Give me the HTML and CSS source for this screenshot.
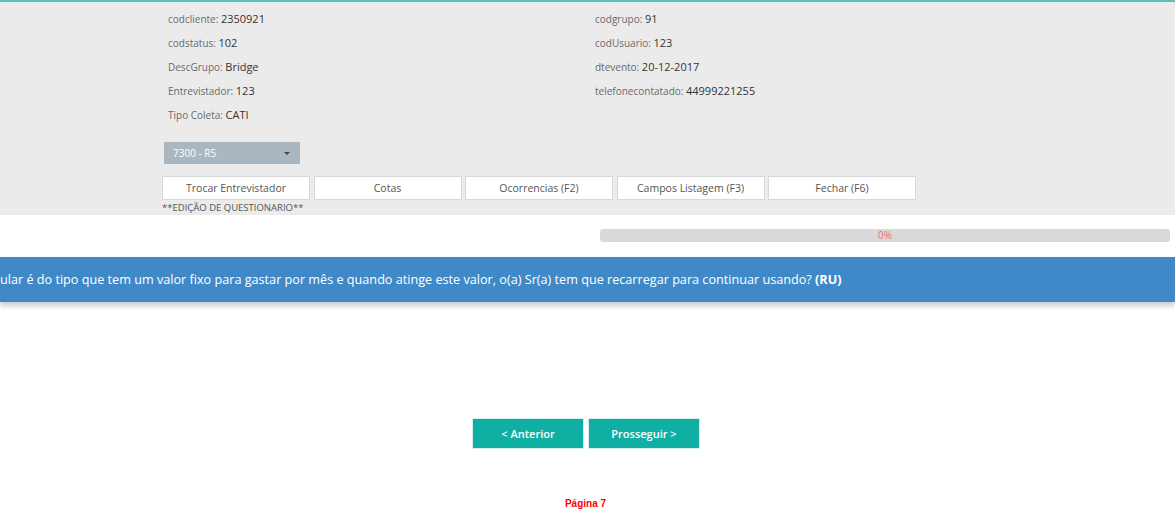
FILE: index.html
```html
<!DOCTYPE html>
<html lang="pt">
<head>
<meta charset="utf-8">
<title>Questionário</title>
<link rel="stylesheet" href="styles.css">
</head>
<body>
<div class="panel">
  <div class="panel-inner">
    <div class="info">
      <div class="col col-left">
        <div class="row"><span class="lbl">codcliente: </span><span class="val">2350921</span></div>
        <div class="row"><span class="lbl">codstatus: </span><span class="val">102</span></div>
        <div class="row"><span class="lbl">DescGrupo: </span><span class="val">Bridge</span></div>
        <div class="row"><span class="lbl">Entrevistador: </span><span class="val">123</span></div>
        <div class="row"><span class="lbl">Tipo Coleta: </span><span class="val">CATI</span></div>
      </div>
      <div class="col">
        <div class="row"><span class="lbl">codgrupo: </span><span class="val">91</span></div>
        <div class="row"><span class="lbl">codUsuario: </span><span class="val">123</span></div>
        <div class="row"><span class="lbl">dtevento: </span><span class="val">20-12-2017</span></div>
        <div class="row"><span class="lbl">telefonecontatado: </span><span class="val">44999221255</span></div>
      </div>
    </div>
    <div class="select"><span>7300 - R5</span><span class="caret"></span></div>
    <div class="actions">
      <button class="btn">Trocar Entrevistador</button>
      <button class="btn">Cotas</button>
      <button class="btn">Ocorrencias (F2)</button>
      <button class="btn">Campos Listagem (F3)</button>
      <button class="btn">Fechar (F6)</button>
    </div>
    <div class="mode">**EDIÇÃO DE QUESTIONARIO**</div>
  </div>
</div>
<div class="progress-wrap">
  <div class="progress"><span>0%</span></div>
</div>
<div class="question">ular é do tipo que tem um valor fixo para gastar por mês e quando atinge este valor, o(a) Sr(a) tem que recarregar para continuar usando? <b>(RU)</b></div>
<div class="nav">
  <button class="nav-btn">&lt; Anterior</button>
  <button class="nav-btn">Prosseguir &gt;</button>
</div>
<div class="page">Página 7</div>
</body>
</html>
```
FILE: styles.css
```css
html, body {
  margin: 0;
  padding: 0;
  background: #fff;
  font-family: "Open Sans", "Noto Sans", sans-serif;
}
.panel {
  background: #ebebeb;
  border-top: 2px solid #5cbfb9;
  height: 215px;
  box-sizing: border-box;
}
.panel-inner {
  padding: 3px 0 0 162px;
}
.info {
  display: flex;
  padding-left: 6px;
}
.col {
  display: flex;
  flex-direction: column;
}
.col-left {
  width: 427px;
}
.row {
  height: 24px;
  line-height: 24px;
  white-space: nowrap;
}
.lbl {
  font-size: 10px;
  color: #6a6a6a;
}
.val {
  font-size: 11px;
  color: #333;
}
.select {
  margin: 17px 0 0 2px;
  width: 136px;
  height: 22px;
  background: #aab7c0;
  color: #fff;
  font-size: 10px;
  display: flex;
  align-items: center;
  justify-content: space-between;
  padding: 0 10px 0 9px;
  box-sizing: border-box;
}
.caret {
  width: 0;
  height: 0;
  border-left: 3px solid transparent;
  border-right: 3px solid transparent;
  border-top: 3px solid #444;
}
.actions {
  display: flex;
  gap: 3.5px;
  margin-top: 12px;
}
.btn {
  width: 148px;
  height: 24px;
  background: #fff;
  border: 1px solid #d8d8d8;
  font-family: "Open Sans", sans-serif;
  font-size: 10.5px;
  color: #555;
  padding: 0;
}
.mode {
  font-size: 9.5px;
  color: #555;
  line-height: 13px;
  margin-top: 1px;
}
.progress-wrap {
  display: flex;
  justify-content: flex-end;
  padding: 14px 5px 0 0;
}
.progress {
  width: 570px;
  height: 13px;
  background: #d9d9d9;
  border-radius: 3px;
  font-size: 10px;
  line-height: 13px;
  color: #f46b6b;
  text-align: center;
}
.question {
  margin-top: 15px;
  height: 45px;
  line-height: 44px;
  background: #3f89c9;
  color: #fff;
  font-size: 12.65px;
  white-space: nowrap;
  overflow: hidden;
  box-shadow: 0 4px 5px rgba(0,0,0,0.2);
}
.question b {
  font-weight: 700;
}
.nav {
  display: flex;
  justify-content: center;
  gap: 4px;
  margin-top: 116px;
  padding-right: 3px;
}
.nav-btn {
  width: 112px;
  height: 31px;
  background: #0fafa4;
  border: 1px solid #d6efec;
  color: #fff;
  font-family: "Open Sans", sans-serif;
  font-weight: 600;
  font-size: 11px;
  padding: 0;
}
.page {
  margin-top: 49px;
  text-align: center;
  font-family: "Liberation Sans", Arial, sans-serif;
  font-weight: bold;
  font-size: 10px;
  color: #f00;
  padding-right: 4px;
}
```
